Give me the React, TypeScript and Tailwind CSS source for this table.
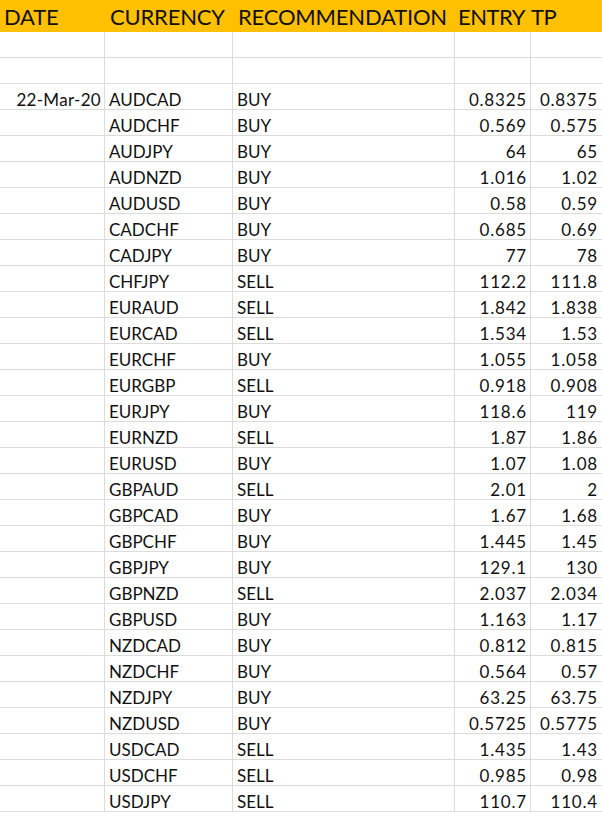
const rows: [string, string, string, string][] = [
  ["AUDCAD", "BUY", "0.8325", "0.8375"],
  ["AUDCHF", "BUY", "0.569", "0.575"],
  ["AUDJPY", "BUY", "64", "65"],
  ["AUDNZD", "BUY", "1.016", "1.02"],
  ["AUDUSD", "BUY", "0.58", "0.59"],
  ["CADCHF", "BUY", "0.685", "0.69"],
  ["CADJPY", "BUY", "77", "78"],
  ["CHFJPY", "SELL", "112.2", "111.8"],
  ["EURAUD", "SELL", "1.842", "1.838"],
  ["EURCAD", "SELL", "1.534", "1.53"],
  ["EURCHF", "BUY", "1.055", "1.058"],
  ["EURGBP", "SELL", "0.918", "0.908"],
  ["EURJPY", "BUY", "118.6", "119"],
  ["EURNZD", "SELL", "1.87", "1.86"],
  ["EURUSD", "BUY", "1.07", "1.08"],
  ["GBPAUD", "SELL", "2.01", "2"],
  ["GBPCAD", "BUY", "1.67", "1.68"],
  ["GBPCHF", "BUY", "1.445", "1.45"],
  ["GBPJPY", "BUY", "129.1", "130"],
  ["GBPNZD", "SELL", "2.037", "2.034"],
  ["GBPUSD", "BUY", "1.163", "1.17"],
  ["NZDCAD", "BUY", "0.812", "0.815"],
  ["NZDCHF", "BUY", "0.564", "0.57"],
  ["NZDJPY", "BUY", "63.25", "63.75"],
  ["NZDUSD", "BUY", "0.5725", "0.5775"],
  ["USDCAD", "SELL", "1.435", "1.43"],
  ["USDCHF", "SELL", "0.985", "0.98"],
  ["USDJPY", "SELL", "110.7", "110.4"],
];

const cell = "h-[26px] border-b border-[#dcdcdc] flex items-end pb-[1px] overflow-hidden whitespace-nowrap";

function Row({ date, cur, rec, entry, tp }: { date: string; cur: string; rec: string; entry: string; tp: string }) {
  return (
    <div className="grid grid-cols-[105px_128px_222px_76px_1fr]">
      <div className={`${cell} border-r justify-end pr-[3px] tracking-[0.3px]`}>{date}</div>
      <div className={`${cell} border-r pl-[4px]`}>{cur}</div>
      <div className={`${cell} border-r pl-[4px]`}>{rec}</div>
      <div className={`${cell} border-r justify-end pr-[3px] tracking-[0.8px]`}>{entry}</div>
      <div className={`${cell} justify-end pr-[4px] tracking-[0.8px]`}>{tp}</div>
    </div>
  );
}

export default function App() {
  return (
    <div className="w-[602px] h-[815px] overflow-hidden bg-white text-[#111] font-['Lato',sans-serif]">
      <div className="h-[32px] bg-[#ffc000] flex items-center text-[22px] tracking-[-0.2px] leading-none pt-[1px] whitespace-nowrap">
        <div className="w-[105px] pl-[4px]">DATE</div>
        <div className="w-[128px] pl-[5px]">CURRENCY</div>
        <div className="w-[222px] pl-[5px]">RECOMMENDATION</div>
        <div className="flex gap-[6px] pl-[3px] tracking-[-0.5px]">
          <span>ENTRY</span>
          <span>TP</span>
        </div>
      </div>
      <div className="text-[17px] leading-none">
        <Row date="" cur="" rec="" entry="" tp="" />
        <Row date="" cur="" rec="" entry="" tp="" />
        {rows.map(([cur, rec, entry, tp], i) => (
          <Row key={cur} date={i === 0 ? "22-Mar-20" : ""} cur={cur} rec={rec} entry={entry} tp={tp} />
        ))}
      </div>
    </div>
  );
}
